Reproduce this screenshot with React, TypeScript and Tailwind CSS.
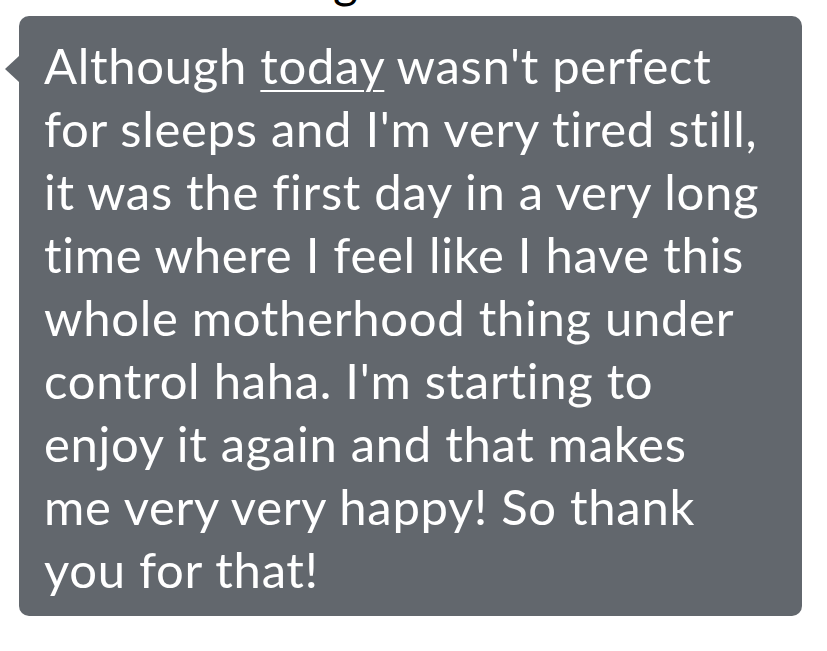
import React from "react";

const lines: React.ReactNode[] = [
  <>
    Although <span className="underline decoration-2 underline-offset-[6px]">today</span> wasn't perfect
  </>,
  "for sleeps and I'm very tired still,",
  "it was the first day in a very long",
  "time where I feel like I have this",
  "whole motherhood thing under",
  "control haha. I'm starting to",
  "enjoy it again and that makes",
  "me very very happy! So thank",
  "you for that!",
];

export default function App() {
  return (
    <div className="w-[827px] h-[651px] bg-white overflow-hidden" style={{ fontFamily: "Lato, 'Noto Sans', sans-serif" }}>
      <div className="h-[16px] overflow-hidden relative">
        <span className="absolute left-[333px] bottom-[12px] text-[48px] leading-none text-black">g</span>
      </div>
      <div className="relative ml-[19px] w-[783px] h-[600px] rounded-[10px] bg-[#62676d]">
        <div className="absolute left-[-14px] top-[40px] w-0 h-0 border-y-[13px] border-y-transparent border-r-[14px] border-r-[#62676d]" />
        <div className="pl-[25px] pt-[18px] text-white text-[49px] leading-[63px] tracking-[0.7px]">
          {lines.map((l, i) => (
            <div key={i} className="whitespace-nowrap">
              {l}
            </div>
          ))}
        </div>
      </div>
    </div>
  );
}
